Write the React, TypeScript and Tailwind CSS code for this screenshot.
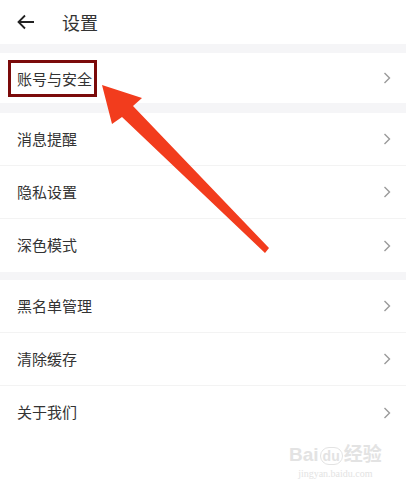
import React from 'react'

const groups: string[][] = [
  ['消息提醒', '隐私设置', '深色模式'],
  ['黑名单管理', '清除缓存', '关于我们'],
]

function Chevron() {
  return (
    <svg width="8" height="12" viewBox="0 0 8 12" className="shrink-0">
      <path d="M1.5 1 L6.5 6 L1.5 11" fill="none" stroke="#9a9a9a" strokeWidth="1.4" />
    </svg>
  )
}

function Row({ label, last }: { label: string; last?: boolean }) {
  return (
    <div className={`flex h-[53px] items-center justify-between pl-[17px] pr-[15px] ${last ? '' : 'border-b border-[#f3f3f3]'}`}>
      <span className="text-[15px] text-[#333]">{label}</span>
      <Chevron />
    </div>
  )
}

export default function App() {
  return (
    <div className="relative h-[497px] w-[406px] overflow-hidden bg-white" style={{ fontFamily: '"Noto Sans CJK SC", "Noto Sans", sans-serif' }}>
      {/* header */}
      <div className="flex h-[44px] items-center">
        <svg width="18" height="16" viewBox="0 0 18 16" className="ml-[17px]">
          <path d="M17 8 H2 M8 1.5 L1.5 8 L8 14.5" fill="none" stroke="#222" strokeWidth="1.8" />
        </svg>
        <span className="ml-[27px] text-[18px] text-[#333]">设置</span>
      </div>

      <div className="h-[9px] bg-[#f5f5f7]" />
      <div className="flex h-[50px] items-center justify-between pr-[15px]">
        <span className="ml-[8px] border-[3px] border-[#7b0a0a] py-[6px] pl-[6px] pr-[2px] text-[15px] leading-[19px] text-[#333]">账号与安全</span>
        <Chevron />
      </div>
      <div className="h-[10px] bg-[#f5f5f7]" />
      {groups[0].map((l, i) => (
        <Row key={l} label={l} last={i === 2} />
      ))}
      <div className="h-[8px] bg-[#f5f5f7]" />
      {groups[1].map((l, i) => (
        <Row key={l} label={l} last={i === 2} />
      ))}

      {/* annotation arrow */}
      <svg className="absolute left-0 top-0" width="406" height="497" viewBox="0 0 406 497">
        <polygon points="102,85 142,98 133,106 269,248 265,253 122,117 112,124" fill="#f23c1d" strokeLinejoin="round" />
      </svg>

      {/* watermark */}
      <div className="absolute left-[289px] top-[443px] flex flex-col items-center text-[#e3e3e3]">
        <span className="text-[19px] font-bold leading-[24px]" style={{ fontFamily: '"Liberation Sans", "Noto Sans CJK SC", sans-serif' }}>Bai<span className="mx-[1px] rounded-full border border-[#e3e3e3] px-[2px] text-[14px]">du</span>经验</span>
        <span className="text-[10px] leading-[12px]" style={{ fontFamily: '"Liberation Serif", serif' }}>jingyan.baidu.com</span>
      </div>
    </div>
  )
}
